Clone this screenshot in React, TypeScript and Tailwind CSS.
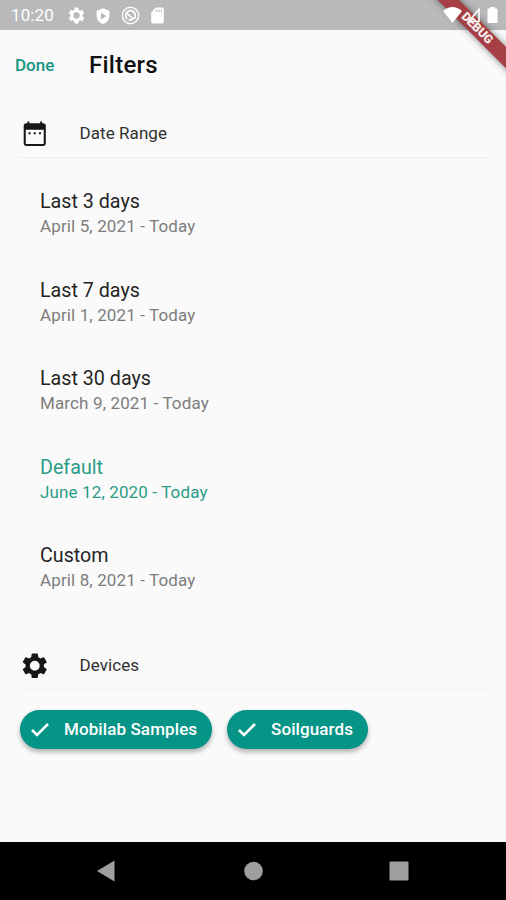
import React from 'react';

const ranges = [
  { title: 'Last 3 days', detail: 'April 5, 2021 - Today' },
  { title: 'Last 7 days', detail: 'April 1, 2021 - Today' },
  { title: 'Last 30 days', detail: 'March 9, 2021 - Today' },
  { title: 'Default', detail: 'June 12, 2020 - Today', selected: true },
  { title: 'Custom', detail: 'April 8, 2021 - Today' },
];

const GEAR =
  'M19.43 12.98c.04-.32.07-.64.07-.98s-.03-.66-.07-.98l2.11-1.65c.19-.15.24-.42.12-.64l-2-3.46c-.12-.22-.39-.3-.61-.22l-2.49 1c-.52-.4-1.08-.73-1.69-.98l-.38-2.65C14.46 2.18 14.25 2 14 2h-4c-.25 0-.46.18-.49.42l-.38 2.65c-.61.25-1.17.59-1.69.98l-2.49-1c-.23-.09-.49 0-.61.22l-2 3.46c-.13.22-.07.49.12.64l2.11 1.65c-.04.32-.07.65-.07.98s.03.66.07.98l-2.11 1.65c-.19.15-.24.42-.12.64l2 3.46c.12.22.39.3.61.22l2.49-1c.52.4 1.08.73 1.69.98l.38 2.65c.03.24.24.42.49.42h4c.25 0 .46-.18.49-.42l.38-2.65c.61-.25 1.17-.59 1.69-.98l2.49 1c.23.09.49 0 .61-.22l2-3.46c.12-.22.07-.49-.12-.64zM12 16a4 4 0 1 1 0-8 4 4 0 0 1 0 8z';
const CALENDAR =
  'M8.600 10.700H6.900v1.700h1.700zm4.250 0h-1.700v1.700h1.700zm4.250 0h-1.700v1.700h1.700zM19 3.500h-1V2h-1.600v1.500H7.600V2H6v1.500H5c-1.110 0-1.990.9-1.990 2L3 20a2 2 0 0 0 2 2h14c1.100 0 2-.9 2-2V5.500c0-1.100-.9-2-2-2zm.300 16.800H4.700V8.700h14.600z';

function Icon({ d, className }: { d: string; className: string }) {
  return (
    <svg viewBox="0 0 24 24" className={className} fill="currentColor" fillRule="evenodd">
      <path d={d} />
    </svg>
  );
}

function StatusBar() {
  return (
    <header className="flex h-[30px] items-center bg-[#b9b9b9] pt-px pl-[11px] text-white">
      <span className="w-[56px] text-[17px] leading-none tracking-[0.1px]">10:20</span>
      <Icon d={GEAR} className="size-[19px]" />
      <Icon
        d="M12 1.500 3.500 5v6.500c0 5.200 3.600 9.700 8.500 11 4.900-1.300 8.500-5.800 8.500-11V5zM9.300 7.500l7.200 4.500-7.200 4.500z"
        className="ml-[8px] size-[18px]"
      />
      <svg viewBox="0 0 20 20" className="ml-[9px] size-[19px]" fill="none" stroke="currentColor">
        <circle cx="10" cy="10" r="8.600" strokeWidth="1.500" />
        <path d="M6.500 13.500A5 5 0 1 1 13.500 13.500" strokeWidth="1.800" />
        <path d="m6 7.500 7.500 6.500M8 14.500h4" strokeWidth="1.800" />
      </svg>
      <Icon
        d="M18 2h-8L4 8v12c0 1.100.9 2 2 2h12a2 2 0 0 0 2-2V4a2 2 0 0 0-2-2zm-6.300 5.500h-1.400V4.500h1.400zm3 0h-1.400V4.500h1.400zm3 0h-1.400V4.500h1.400z"
        className="ml-[8px] size-[19px]"
      />
    </header>
  );
}

function DebugBanner() {
  return (
    <div className="pointer-events-none absolute top-0 right-0 size-[110px] overflow-hidden">
      <div className="absolute top-[21.300px] left-[1.300px] flex h-[14.800px] w-[160px] rotate-45 items-center justify-center bg-[#a63f43] text-[12.200px] leading-none font-black text-[#f6eded] shadow-[0_0_7px_rgba(0,0,0,0.5)]">
        DEBUG
      </div>
    </div>
  );
}

function SystemIcons() {
  return (
    <svg viewBox="0 0 70 30" className="absolute top-0 right-0 h-[30px] w-[70px]" fill="white">
      <path d="M7 11q9.500-8 19 0l-9.500 12z" />
      <path d="M43 9.500v12H32.500z" fill="none" stroke="white" strokeWidth="1.600" />
      <path d="M54 7h5v1.500h1.500q1 0 1 1V22q0 1-1 1h-8q-1 0-1-1V9.500q0-1 1-1H54z" />
    </svg>
  );
}

function SectionHeader({ icon, label, line }: { icon: string; label: string; line: string }) {
  return (
    <div className={`mr-[18px] ml-[20px] flex h-[50px] items-center border-b pt-[2px] ${line}`}>
      <Icon d={icon} className="size-[29.500px] text-[#171717]" />
      <h2 className="ml-[30px] text-[17px] leading-none tracking-[0.070px] text-[#303030]">{label}</h2>
    </div>
  );
}

function Chip({ label, width }: { label: string; width: string }) {
  return (
    <button
      className={`flex h-[39px] items-center rounded-full bg-[#059486] pl-[10px] text-[17px] font-medium tracking-[0.100px] text-white shadow-[0_3px_5px_rgba(0,0,0,0.3)] ${width}`}
    >
      <svg viewBox="0 0 20 20" className="size-5" fill="none" stroke="currentColor" strokeWidth="2.500">
        <path d="m2 10 5 5 11-11" />
      </svg>
      <span className="ml-[14px] whitespace-nowrap">{label}</span>
    </button>
  );
}

export default function App() {
  return (
    <div className="relative flex h-[900px] w-[506px] flex-col overflow-hidden bg-[#fafafa] font-['Roboto',sans-serif]">
      <StatusBar />
      <div className="flex h-[70px] items-center pl-[15px]">
        <button className="w-[74px] pt-[2px] text-left text-[17px] font-medium text-[#159582]">Done</button>
        <h1 className="text-[24px] font-medium tracking-[0.250px] text-[#111]">Filters</h1>
      </div>
      <main className="flex grow flex-col pt-[8px]">
        <SectionHeader icon={CALENDAR} label="Date Range" line="border-[#ececec]" />
        <ul className="mt-[29px] pl-[40px]">
          {ranges.map((range) => (
            <li key={range.title} className="h-[88.500px]">
              <p
                className={`text-[19.700px] leading-[30px] ${range.selected ? 'text-[#2b9c87]' : 'text-[#252525]'}`}
              >
                {range.title}
              </p>
              <p
                className={`text-[17px] leading-[19px] tracking-[0.130px] ${range.selected ? 'text-[#2b9c87]' : 'text-[#7d7d7d]'}`}
              >
                {range.detail}
              </p>
            </li>
          ))}
        </ul>
        <div className="mt-[10.500px]">
          <SectionHeader icon={GEAR} label="Devices" line="border-[#f3f3f3]" />
        </div>
        <div className="mt-[20px] flex gap-[15px] pl-[20px]">
          <Chip label="Mobilab Samples" width="w-[192px]" />
          <Chip label="Soilguards" width="w-[141px]" />
        </div>
      </main>
      <nav className="flex h-[58px] shrink-0 items-center bg-black text-[#9e9e9e]">
        <svg viewBox="0 0 506 58" className="h-[58px] w-[506px]" fill="currentColor">
          <path d="M97 29 114.500 18.500v21z" />
          <circle cx="253.500" cy="29" r="9.300" />
          <rect x="389.500" y="19.500" width="19" height="19" rx="1" />
        </svg>
      </nav>
      <DebugBanner />
      <SystemIcons />
    </div>
  );
}
